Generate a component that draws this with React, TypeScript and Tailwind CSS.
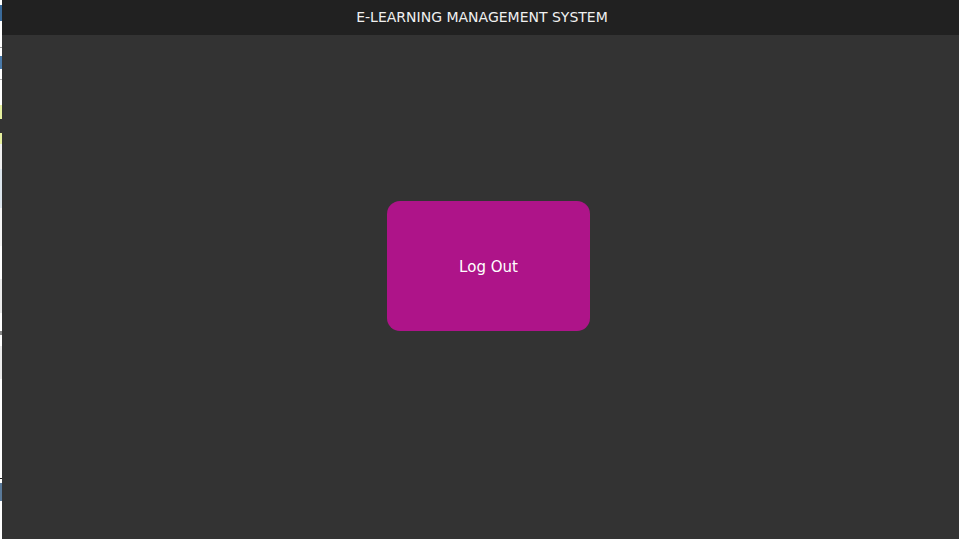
export default function App() {
  return (
    <div className="flex h-[539px] w-[959px] overflow-hidden bg-white" style={{ fontFamily: '"DejaVu Sans", sans-serif' }}>
      <div className="flex w-[2px] shrink-0 flex-col bg-white">
        <div className="h-[5px]" />
        <div className="h-[16px] bg-[#3a6a9a]" />
        <div className="h-[26px]" />
        <div className="h-[1px] bg-[#999]" />
        <div className="h-[8px]" />
        <div className="h-[13px] bg-[#4a7aaa]" />
        <div className="h-[10px]" />
        <div className="h-[1px] bg-[#aaa]" />
        <div className="h-[25px]" />
        <div className="h-[14px] bg-[#e6f0a0]" />
        <div className="h-[14px] bg-[#333]" />
        <div className="h-[11px] bg-[#e6f0a0]" />
        <div className="h-[25px] bg-[#f0f0f0]" />
        <div className="h-[39px] bg-[#dde6ee]" />
        <div className="h-[38px] bg-[#f6f6f6]" />
        <div className="h-[33px] bg-white" />
        <div className="h-[34px] bg-[#ececec]" />
        <div className="h-[18px]" />
        <div className="h-[4px] bg-[#888]" />
        <div className="h-[11px]" />
        <div className="h-[33px] bg-[#ececec]" />
        <div className="h-[99px]" />
        <div className="h-[1px] bg-[#222]" />
        <div className="h-[4px]" />
        <div className="h-[18px] bg-[#5a7a9a]" />
        <div className="flex-1" />
      </div>
      <div className="flex flex-1 flex-col bg-[#333333]">
        <header className="flex h-[35px] shrink-0 items-center justify-center bg-[#212121] pl-[3px] text-[14px] text-[#f0f0f0]">
          E-LEARNING MANAGEMENT SYSTEM
        </header>
        <main className="flex flex-1 items-start pl-[385px] pt-[166px]">
          <button className="flex h-[130px] w-[203px] items-center justify-center rounded-[13px] bg-[#ae1489] pt-[2px] text-[15px] text-white">
            Log Out
          </button>
        </main>
      </div>
    </div>
  );
}
